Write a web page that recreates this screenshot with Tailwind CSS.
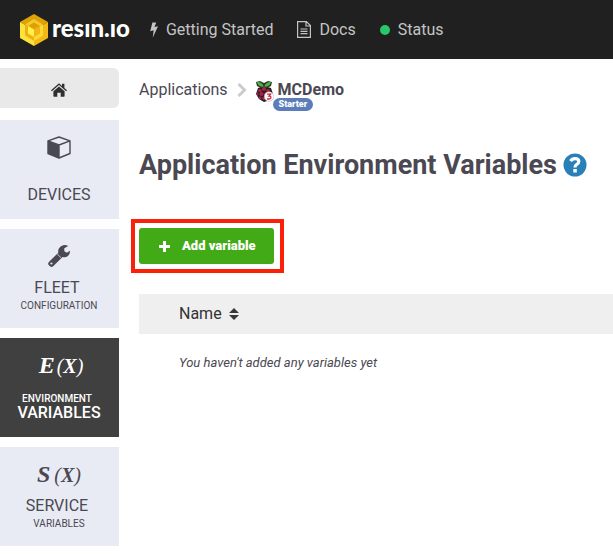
<!DOCTYPE html>
<html lang="en">
<head>
<meta charset="utf-8">
<meta name="viewport" content="width=device-width, initial-scale=1">
<title>Application Environment Variables</title>
<script src="https://cdn.jsdelivr.net/npm/@tailwindcss/browser@4"></script>
</head>
<body class="min-h-screen overflow-x-hidden bg-white font-['Roboto',sans-serif] text-[#4a4852]">
<header class="flex h-[59px] items-center bg-[#202020] pl-5 text-base text-[#c4c4c4]">
  <a href="#" aria-label="resin.io" class="mr-5 flex items-center text-white">
    <svg class="mr-1 h-8 w-7" viewBox="0 0 28 32" aria-hidden="true">
      <path fill="#e0a106" d="M14 0 28 8 14 16 0 8z"/>
      <path fill="#fce33c" d="M0 8 14 16v16L0 24z"/>
      <path fill="#f5b916" d="M28 8 14 16v16l14-8z"/>
      <path fill="#f7c928" d="M14 5 23 10.500 14 16 5 10.500z"/>
      <path fill="#eeb312" d="M5 10.500 14 16v11l-9-5.500z"/>
      <path fill="#fcd935" d="M23 10.500 14 16v11l9-5.500z"/>
      <path fill="#dda007" d="M14 8.500 20 12l-6 3.500L8 12z"/>
      <path fill="#fff04c" d="M8 12l6 3.500V23l-6-3.500z"/>
      <path fill="#f3b416" d="M20 12l-6 3.500V23l6-3.500z"/>
    </svg>
    <span class="pb-1 font-['Lato',sans-serif] text-2xl leading-7 font-black">resın.ıo</span>
  </a>
  <nav class="flex items-center">
    <a href="#" class="mr-6 flex items-center">
      <svg class="mr-2 h-4 w-2" viewBox="0 0 8 16" fill="#c4c4c4" aria-hidden="true"><path d="M2.400.500h3.800L4.500 5 8 4.200 2.700 15.700 3.700 8.300.200 9.200z"/></svg>
      Getting Started
    </a>
    <a href="#" class="mr-6 flex items-center">
      <svg class="mr-2 h-[17px] w-[14px]" viewBox="0 0 14 17" fill="none" stroke="#c4c4c4" stroke-width="1.200" aria-hidden="true"><path d="M.600.600h8.800l4 4v11.800H.600zM9 1v4h4M3.500 8h7M3.500 10.300h7M3.500 12.600h7"/></svg>
      Docs
    </a>
    <a href="#" class="flex items-center"><span class="mr-2 size-[10px] rounded-full bg-[#28c76a]"></span>Status</a>
  </nav>
</header>
<div class="flex">
  <nav class="w-[119px] shrink-0 pt-[9px] text-center" aria-label="Application">
    <a href="#" aria-label="Home" class="mb-3 flex h-10 items-center justify-center rounded-r-md bg-[#e9e9e9]">
      <svg class="mt-1 mr-[2px] h-[14px] w-4" viewBox="0 0 16 14" fill="#2f2f2f" aria-hidden="true"><path d="M8 .300 11 2.900V.700h2.400v4.200L16 7.200l-.900 1L8 2.100.900 8.200 0 7.200z"/><path d="M8 3.400 13.600 8.200v4.900q0 .700-.700.700H9.700V9.700H6.300v4.100H3.100q-.700 0-.700-.700V8.200z"/></svg>
    </a>
    <div class="flex flex-col gap-[10px]">
      <a href="#" class="flex h-[99px] flex-col items-center bg-[#e8ebf3] pt-4 pr-px">
        <svg class="mb-6 h-[23px] w-6" viewBox="0 0 24 23" aria-hidden="true"><path fill="none" stroke="#4a4852" stroke-width="1.400" stroke-linejoin="round" d="M12 1 23 4.800v12.700L12 22 1 17.500V4.800zM1 4.800 12 9l11-4.200M12 9v13"/><path fill="#4a4852" d="M1 5l11 4.200V22L1 17.500z"/></svg>
        <span class="text-base leading-6">DEVICES</span>
      </a>
      <a href="#" class="flex h-[99px] flex-col items-center bg-[#e8ebf3] pt-4 pr-px">
        <svg class="mb-[9px] h-[22px] w-[22px]" viewBox="0 0 22 22" fill="#4a4852" aria-hidden="true"><path fill-rule="evenodd" d="M20.200.900 16.300 3.200v3l2.600 1.500 3-1.900q.400 3-2 5.100-2.300 1.900-5.300 1L5.400 21q-1.300 1.400-3.100.600L.600 19.900q-1-1.700.500-3.200l9.200-9Q9.600 4 12.300 1.700 15.900-1 20.200.900M3.400 17.400a1.100 1.100 0 1 0 .010 2.200 1.100 1.100 0 0 0-.010-2.200"/><path stroke="#e8ebf3" stroke-width=".8" d="m9.200 8.900 4 4"/></svg>
        <span class="-ml-1 text-base leading-6">FLEET</span>
        <span class="text-[10px] leading-3">CONFIGURATION</span>
      </a>
      <a href="#" aria-current="page" class="flex h-[99px] flex-col items-center bg-[#404040] pt-3 pr-px text-white">
        <span class="mb-3 flex h-[31px] items-baseline gap-[2px] pl-1 font-['Liberation_Serif',serif] italic"><span class="text-2xl leading-[30px] font-bold">E</span> <span class="pt-px text-xl font-normal">(<b>X</b>)</span></span>
        <span class="-ml-1 text-[10px] leading-3 font-medium">ENVIRONMENT</span>
        <span class="text-base leading-4 font-medium">VARIABLES</span>
      </a>
      <a href="#" class="flex h-[99px] flex-col items-center bg-[#e8ebf3] pt-3 pr-px">
        <span class="mb-1 flex h-[31px] items-baseline gap-1 font-['Liberation_Serif',serif] italic"><span class="text-2xl leading-[30px] font-bold">S</span> <span class="pt-px text-xl font-normal">(<b>X</b>)</span></span>
        <span class="-ml-1 text-base leading-6">SERVICE</span>
        <span class="text-[10px] leading-3">VARIABLES</span>
      </a>
    </div>
  </nav>
  <main class="min-w-0 flex-1 pt-[21px] pl-5">
    <nav class="flex h-5 items-center text-base whitespace-nowrap" aria-label="Breadcrumb">
      <a href="#">Applications</a>
      <svg class="mx-[9px] h-[14px] w-[10px]" viewBox="0 0 10 14" fill="none" stroke="#cccccc" stroke-width="3" aria-hidden="true"><path d="M1.500 1 7.500 7l-6 6"/></svg>
      <a href="#" class="relative flex items-center font-bold">
        <svg class="mt-[2px] mr-1 h-[21px] w-[18px]" viewBox="0 0 18 21" aria-hidden="true">
          <path fill="#222" d="M8 5 2 7 0 13l3 5 5 3 6-2 3-6-2-6z"/>
          <path fill="#213c20" d="M0 1 4 0l4 2 4-2 4 1-1 4-4 2H5L1 5z"/>
          <path fill="#58ad4b" d="M1 1Q6 .500 7.700 5.500 2.500 6.500 1 1M15 1Q10 .500 8.300 5.500 13.500 6.500 15 1"/>
          <g fill="#b31f48"><circle cx="8" cy="8" r="2"/><ellipse cx="4" cy="9.500" rx="1.800" ry="1.500"/><ellipse cx="12" cy="9.500" rx="1.800" ry="1.500"/><circle cx="5.500" cy="13" r="2.100"/><circle cx="10.500" cy="13" r="2.100"/><ellipse cx="1.700" cy="13" rx=".8" ry="1.700"/><ellipse cx="4.200" cy="16.800" rx="1.400" ry="1.200"/><ellipse cx="8" cy="17.500" rx="2" ry="1.500"/></g>
          <circle cx="13" cy="15.500" r="4.800" fill="#fff" stroke="#b79b9f" stroke-width=".5"/>
          <path fill="none" stroke="#d0273c" stroke-width="1.300" d="M11 13.200h3.500L13 15q2 0 2 1.500t-2 1.500h-2"/>
        </svg>
        MCDemo
        <span class="absolute top-5 left-[17px] rounded-full bg-[#5b7dba] px-[6px] text-[9px] leading-[13px] font-black text-white">Starter</span>
      </a>
    </nav>
    <div class="mt-[49px] flex items-center whitespace-nowrap">
      <h1 class="text-[27px] leading-8 font-bold">Application Environment Variables</h1>
      <a href="#" aria-label="Help" class="ml-[6px]">
        <svg class="h-6 w-6" viewBox="0 0 24 24" aria-hidden="true"><circle cx="12" cy="12" r="11.500" fill="#2980b9"/><path fill="none" stroke="#fff" stroke-width="3.200" d="M7.500 8.200Q9.200 5.600 12 5.600q3.800 0 3.800 3 0 1.800-2 2.800-1.800.900-1.800 3"/><path fill="#fff" d="M10.300 16h3.500v3.500h-3.500z"/></svg>
      </a>
    </div>
    <div class="mt-[38px] -ml-2 w-fit border-4 border-[#fb2108] py-[5px] pr-[6px] pl-1">
      <button type="button" class="flex h-9 items-center rounded-[3px] bg-[#42aa17] pr-[18px] pl-5 text-[13px] font-black text-white">
        <svg class="mr-3 h-[11px] w-[11px]" viewBox="0 0 11 11" stroke="#fff" stroke-width="3" aria-hidden="true"><path d="M5.500 0v11M0 5.500h11"/></svg>
        Add variable
      </button>
    </div>
    <table class="mt-[21px] w-full text-left">
      <thead><tr class="h-10 bg-[#efefef]"><th scope="col" class="pl-10 text-base font-normal text-[#333]">
        <button type="button" class="flex items-center">Name
          <svg class="ml-[7px] h-3 w-[10px]" viewBox="0 0 10 12" fill="#383838" aria-hidden="true"><path d="M5 0l5 5H0zM5 12l5-5H0z"/></svg>
        </button></th></tr></thead>
      <tbody><tr class="h-[58px]"><td class="pl-10 text-[13px] italic">You haven't added any variables yet</td></tr></tbody>
    </table>
  </main>
</div>
</body>
</html>
